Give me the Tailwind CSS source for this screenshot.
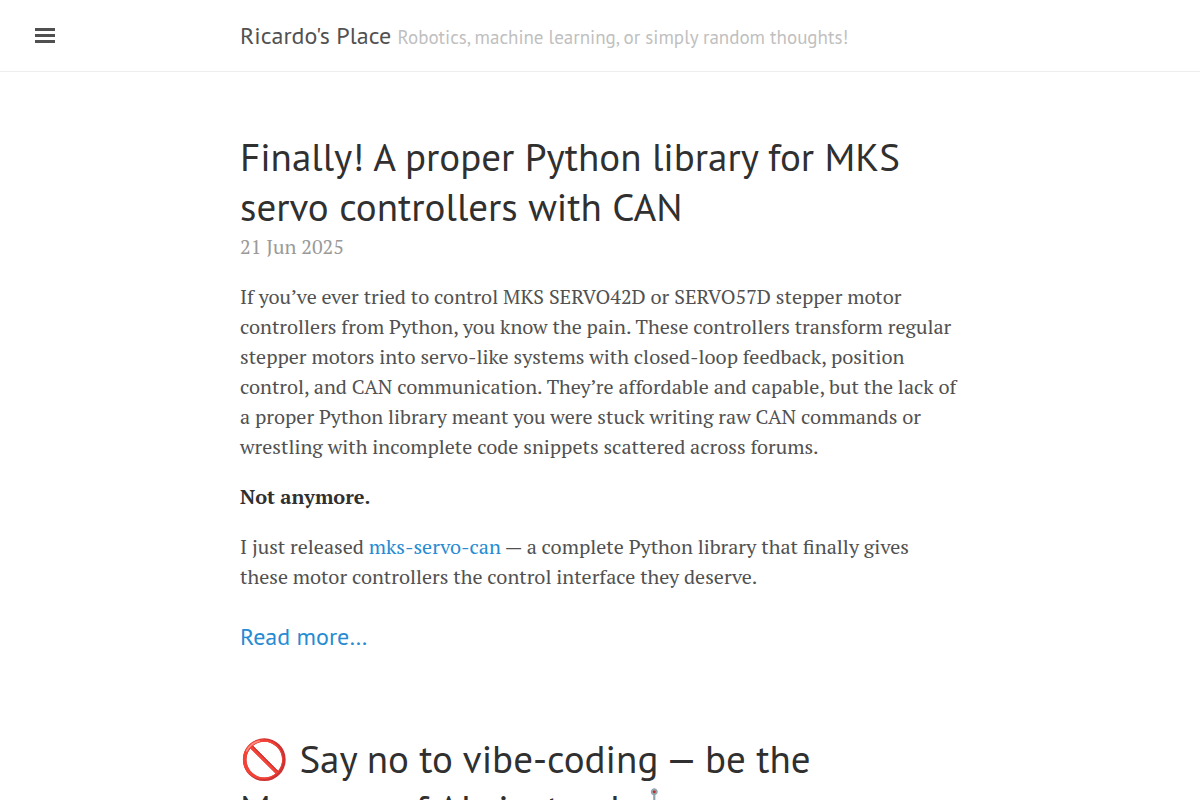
<!DOCTYPE html>
<html lang="en">
<head>
<meta charset="UTF-8">
<meta name="viewport" content="width=device-width, initial-scale=1.0">
<title>Ricardo's Place</title>
<script src="https://cdn.jsdelivr.net/npm/@tailwindcss/browser@4"></script>
</head>
<body class="bg-white text-[#515151] text-[20px] leading-[30px] font-['PT_Serif','Liberation_Serif',serif]">
<header class="relative border-b border-[#eee] pt-5 pb-[18px]">
  <button type="button" aria-label="Toggle sidebar" class="absolute left-[35px] top-7 flex w-5 flex-col gap-[3px]">
    <span class="h-[3px] bg-[#505050]"></span>
    <span class="h-[3px] bg-[#505050]"></span>
    <span class="h-[3px] bg-[#505050]"></span>
  </button>
  <div class="mx-auto max-w-[720px] font-['PT_Sans','Noto_Sans',sans-serif]">
    <h3 class="text-[24px] leading-[32px]">
      <a href="#">Ricardo's Place</a>
      <small class="text-[19px] text-[#c0c0c0]">Robotics, machine learning, or simply random thoughts!</small>
    </h3>
  </div>
</header>

<main class="mx-auto flex max-w-[720px] flex-col gap-[82px] pt-[60px]">
  <article>
    <h1 class="text-[39px] leading-[50px] text-[#303030] font-['PT_Sans','Noto_Sans',sans-serif]"><a href="#">Finally! A proper Python library for MKS servo controllers with CAN</a></h1>
    <time class="block text-[#9a9a9a]">21 Jun 2025</time>
    <div class="mt-5 flex flex-col gap-5">
      <p>If you’ve ever tried to control MKS SERVO42D or SERVO57D stepper motor controllers from Python, you know the pain. These controllers transform regular stepper motors into servo-like systems with closed-loop feedback, position control, and CAN communication. They’re affordable and capable, but the lack of a proper Python library meant you were stuck writing raw CAN commands or wrestling with incomplete code snippets scattered across forums.</p>
      <p><strong class="text-[#303030]">Not anymore.</strong></p>
      <p>I just released <a href="#" class="text-[#268bd2]">mks-servo-can</a> — a complete Python library that finally gives these motor controllers the control interface they deserve.</p>
    </div>
    <a href="#" class="mt-[30px] block text-[24px] text-[#268bd2] font-['PT_Sans','Noto_Sans',sans-serif]">Read more…</a>
  </article>

  <article>
    <h1 class="text-[39px] leading-[50px] text-[#303030] font-['PT_Sans','Noto_Sans',sans-serif]"><a href="#">🚫 Say no to vibe-coding — be the Manager of AIs instead 🤖</a></h1>
  </article>
</main>
</body>
</html>
